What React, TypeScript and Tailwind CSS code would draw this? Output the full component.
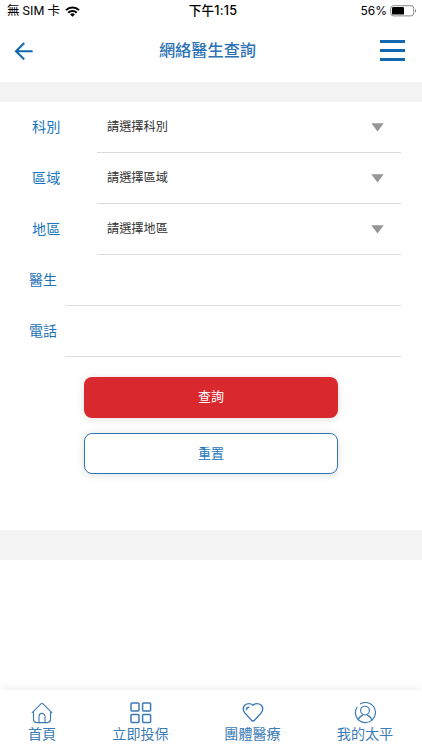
import React from "react";

const BLUE = "#1168b0";
const FONT = "font-['Inter','Noto_Sans_CJK_TC',sans-serif]";

function StatusBar() {
  return (
    <div className="flex h-[22px] items-center text-[12px] leading-[22px] text-black">
      <div className="flex flex-1 items-center gap-[5px] pl-[7px]">
        <span className="whitespace-nowrap font-['Roboto','Noto_Sans_CJK_TC',sans-serif] text-[12.5px]">
          無 SIM 卡
        </span>
        <svg width="15" height="11" viewBox="0 0 15 11" fill="none" stroke="#000" strokeWidth="2">
          <path d="M1 4.1a9.2 9.2 0 0 1 13 0" />
          <path d="M3.3 6.7a5.9 5.9 0 0 1 8.4 0" />
          <path d="M7.5 10.8 5.1 8.4a3.4 3.4 0 0 1 4.8 0z" fill="#000" stroke="none" />
        </svg>
      </div>
      <span className="w-[54px] whitespace-nowrap pl-[2px] text-center text-[12.6px] font-medium tracking-[0.2px]">
        下午1:15
      </span>
      <div className="flex flex-1 items-center justify-end gap-[3px] pr-[5px]">
        <span className="text-[12px]">56%</span>
        <svg width="27" height="12" viewBox="0 0 27 12">
          <rect x="0.7" y="0.7" width="23" height="10.2" rx="2.8" fill="none" stroke="#8a8a8a" />
          <rect x="2" y="2" width="12" height="7.6" rx="1.2" fill="#000" />
          <path d="M25 4v3.6c1.5-.6 1.5-3 0-3.6z" fill="#8a8a8a" />
        </svg>
      </div>
    </div>
  );
}

function Header() {
  return (
    <header className="flex h-[60px] items-start justify-between pl-[14px] pr-[17px]">
      <svg className="mt-[20px]" width="20" height="18" viewBox="0 0 20 18" fill="none" stroke={BLUE} strokeWidth="2.1">
        <path d="M18.6 9.2H2.5M10.2 1 2 9.2l8.2 8.2" />
      </svg>
      <h1 className="mt-[16px] pl-[1px] text-[16.2px] font-medium leading-[24px] text-[#2c72b5]">網絡醫生查詢</h1>
      <div className="mt-[18px] flex w-[25px] flex-col gap-[6px]">
        <i className="h-[3px] bg-[#1168b0]" />
        <i className="h-[3px] bg-[#1168b0]" />
        <i className="h-[3px] bg-[#1168b0]" />
      </div>
    </header>
  );
}

function SelectRow({ label, value }: { label: string; value: string }) {
  return (
    <div className="flex h-[51px] pl-[32px] pr-[21px]">
      <span className="w-[65px] text-[14.2px] leading-[50px] text-[#1b76bd]">{label}</span>
      <div className="flex flex-1 items-center justify-between border-b border-[#dcdada] pl-[10px] pr-[17px]">
        <span className="text-[12.2px] leading-[48px] text-[#333]">{value}</span>
        <svg width="13" height="9" viewBox="0 0 13 9">
          <path d="M0.3 0.3h12.4L6.5 8.4z" fill="#969696" />
        </svg>
      </div>
    </div>
  );
}

function InputRow({ label }: { label: string }) {
  return (
    <div className="flex h-[51px] pl-[29px] pr-[21px]">
      <span className="w-[36px] text-[14px] leading-[50px] text-[#1b70b5]">{label}</span>
      <div className="flex-1 border-b border-[#dcdcdc]" />
    </div>
  );
}

const iconProps = {
  width: 22,
  height: 22,
  viewBox: "0 0 22 22",
  fill: "none",
  stroke: "#3b7ab5",
  strokeLinecap: "round" as const,
  strokeLinejoin: "round" as const,
};

function HomeIcon() {
  return (
    <svg {...iconProps} strokeWidth="1.1">
      <path d="M1.2 10.6 10.2 1.6q.8-.7 1.6 0l9 9" />
      <path d="M2.5 9.6v8q0 3 3 3h11q3 0 3-3v-8" />
      <path d="M8 20.6v-6.2a3 3 0 0 1 6 0v6.2" />
    </svg>
  );
}

function GridIcon() {
  return (
    <svg {...iconProps} strokeWidth="1.5">
      <rect x="1" y="0.9" width="8" height="8" rx="0.8" />
      <rect x="12.6" y="0.9" width="8" height="8" rx="0.8" />
      <rect x="1" y="12.4" width="8" height="8" rx="0.8" />
      <rect x="12.6" y="12.4" width="8" height="8" rx="0.8" />
    </svg>
  );
}

function HeartIcon() {
  return (
    <svg {...iconProps} strokeWidth="1.4">
      <path d="M11 3.2C8.8 1.2 5.2 1.1 3 3.1c-2.3 2.2-2.2 5.6-.2 7.8l6.7 7.3c.9.9 2.1.9 3 0l6.7-7.3c2-2.2 2.1-5.6-.2-7.8-2.2-2-5.8-1.9-8 .1z" />
      <path d="M4.4 7.6c.1-1.5 1-2.3 2.4-2.4" />
    </svg>
  );
}

function UserIcon() {
  return (
    <svg {...iconProps} strokeWidth="1.15">
      <path d="M6.6 1.8A10 10 0 1 1 3 5.2" />
      <circle cx="11" cy="8.6" r="4.4" />
      <path d="M4.2 18c.5-2.6 2.4-4 4.5-4.9M17.8 18c-.5-2.6-2.4-4-4.5-4.9" />
    </svg>
  );
}

const tabs = [
  { label: "首頁", icon: <HomeIcon />, width: "w-[84px]" },
  { label: "立即投保", icon: <GridIcon />, width: "w-[113px]" },
  { label: "團體醫療", icon: <HeartIcon />, width: "w-[111px]" },
  { label: "我的太平", icon: <UserIcon />, width: "w-[114px]" },
];

export default function App() {
  return (
    <div className={`flex h-[750px] w-[422px] flex-col overflow-hidden bg-white ${FONT}`}>
      <StatusBar />
      <Header />
      <div className="h-[20px] shrink-0 bg-[#f3f3f3]" />
      <main className="flex h-[428px] flex-col">
        <SelectRow label="科別" value="請選擇科別" />
        <SelectRow label="區域" value="請選擇區域" />
        <SelectRow label="地區" value="請選擇地區" />
        <InputRow label="醫生" />
        <InputRow label="電話" />
        <div className="mt-[20px] flex flex-col items-center gap-[15px]">
          <button className="h-[41px] w-[254px] rounded-[8px] bg-[#d9292f] pb-[2px] text-[13px] leading-[39px] text-white shadow-[0_1px_8px_rgba(0,0,0,0.13)]">
            查詢
          </button>
          <button className="h-[41px] w-[254px] rounded-[8px] border border-[#2d75b5] bg-white text-[13px] leading-[39px] text-[#1b76bd] shadow-[0_1px_8px_rgba(0,0,0,0.13)]">
            重置
          </button>
        </div>
      </main>
      <div className="h-[30px] shrink-0 bg-[#f4f4f4]" />
      <div className="flex-1" />
      <nav className="flex h-[60px] shrink-0 bg-white pt-[12px] shadow-[0_-1px_10px_rgba(0,0,0,0.08)]">
        {tabs.map((tab) => (
          <div key={tab.label} className={`flex flex-col items-center ${tab.width}`}>
            {tab.icon}
            <span className="text-[14.1px] leading-[19px] text-[#3b7ab5]">{tab.label}</span>
          </div>
        ))}
      </nav>
    </div>
  );
}
